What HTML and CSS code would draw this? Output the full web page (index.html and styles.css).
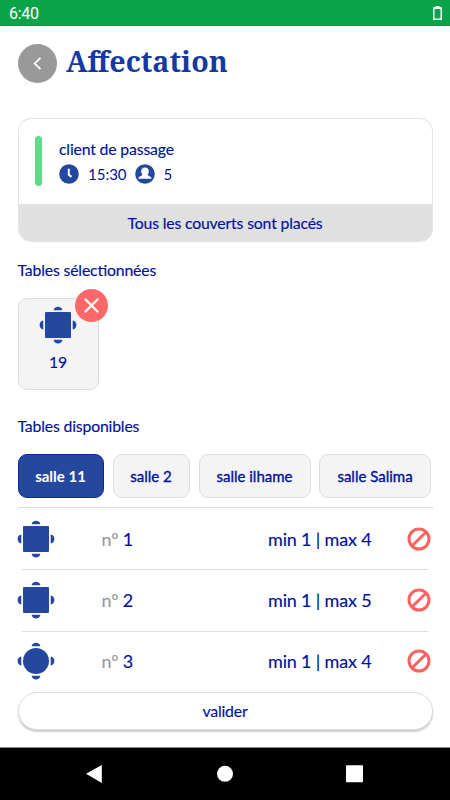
FILE: index.html
```html
<!DOCTYPE html>
<html lang="fr">
<head>
<meta charset="utf-8">
<title>Affectation</title>
<link rel="stylesheet" href="styles.css">
</head>
<body>
<svg class="defs" width="0" height="0" aria-hidden="true">
  <symbol id="seats" viewBox="0 0 38 38">
    <path d="M14.6 4.3C14.9-.6 23.1-.6 23.4 4.3ZM14.6 33.7C14.9 38.6 23.1 38.6 23.4 33.7ZM4.3 14.6C-.6 14.9-.6 23.1 4.3 23.4ZM33.7 14.6C38.6 14.9 38.6 23.1 33.7 23.4Z"/>
  </symbol>
  <symbol id="square-table" viewBox="0 0 38 38">
    <use href="#seats"/><rect x="6" y="6" width="26" height="26" rx="1"/>
  </symbol>
  <symbol id="round-table" viewBox="0 0 38 38">
    <use href="#seats"/><circle cx="19" cy="19" r="13"/>
  </symbol>
  <symbol id="ban" viewBox="0 0 24 24">
    <circle cx="12" cy="12" r="10" fill="none" stroke="#ff6060" stroke-width="3"/><path d="M5.2 18.8 18.8 5.2" stroke="#ff6060" stroke-width="3"/>
  </symbol>
</svg>
<div class="status"><span>6:40</span>
  <svg width="9" height="14" viewBox="0 0 9 14"><path d="M2.5 0h4v1.2H9V14H0V1.2h2.5Z" fill="#fff"/><path d="M1.5 3h6v9.5h-6Z" fill="#0aa34a"/></svg>
</div>
<main>
  <header>
    <button class="back"><svg width="39" height="39" viewBox="0 0 39 39"><path d="m22.5 13.8-5.8 5.7 5.8 5.7" fill="none" stroke="#fff" stroke-width="1.7"/></svg></button>
    <h1>Affectation</h1>
  </header>
  <section class="card">
    <div class="client">
      <i class="bar"></i>
      <div>
        <div class="name">client de passage</div>
        <div class="meta">
          <svg width="20" height="20" viewBox="0 0 20 20"><circle cx="10" cy="10" r="9.8" fill="#25489f"/><path d="M9.8 4.7v6l2.7 2.2" fill="none" stroke="#fff" stroke-width="2" stroke-linejoin="round"/></svg>
          <span class="time">15:30</span>
          <svg width="20" height="20" viewBox="0 0 20 20"><circle cx="10" cy="10" r="9.8" fill="#25489f"/><path d="M10 3.5c-2.6 0-4 1.9-3.8 4.2.1 1.5.8 2.4 1.3 3-.3 1.3-3.8 1-4.1 4.1h13.2c-.3-3.1-3.8-2.8-4.1-4.1.5-.6 1.2-1.5 1.3-3 .2-2.3-1.2-4.2-3.8-4.2Z" fill="#fff"/></svg>
          <span class="count">5</span>
        </div>
      </div>
    </div>
    <div class="notice">Tous les couverts sont placés</div>
  </section>
  <h2>Tables sélectionnées</h2>
  <div class="selected">
    <svg class="table" width="38" height="38"><use href="#square-table"/></svg>
    <span>19</span>
    <button class="remove"><svg width="33" height="33" viewBox="0 0 33 33"><path d="m10.5 10.5 12 12m0-12-12 12" stroke="#fff" stroke-width="2.3" stroke-linecap="round"/></svg></button>
  </div>
  <h2 class="available">Tables disponibles</h2>
  <nav class="rooms">
    <button class="room active">salle 11</button>
    <button class="room r2">salle 2</button>
    <button class="room r3">salle ilhame</button>
    <button class="room r4">salle Salima</button>
  </nav>
  <div class="list">
    <div class="row"><svg class="table" width="38" height="38"><use href="#square-table"/></svg><span class="num"><b>nº</b> 1</span><span class="range">min 1 | max 4</span><svg class="ban" width="24" height="24"><use href="#ban"/></svg></div>
    <div class="row"><svg class="table" width="38" height="38"><use href="#square-table"/></svg><span class="num"><b>nº</b> 2</span><span class="range">min 1 | max 5</span><svg class="ban" width="24" height="24"><use href="#ban"/></svg></div>
    <div class="row"><svg class="table" width="38" height="38"><use href="#round-table"/></svg><span class="num"><b>nº</b> 3</span><span class="range">min 1 | max 4</span><svg class="ban" width="24" height="24"><use href="#ban"/></svg></div>
  </div>
  <button class="submit">valider</button>
</main>
<footer>
  <svg width="450" height="52" viewBox="0 0 450 52" fill="#fff"><path d="M86 25.8 101.8 17v18Z"/><circle cx="225" cy="25.8" r="8"/><rect x="346" y="17.3" width="17" height="17" rx=".8"/></svg>
</footer>
</body>
</html>
```
FILE: styles.css
```css
* { box-sizing: border-box; }
body { margin: 0; width: 450px; height: 800px; display: flex; flex-direction: column; background: #fff; color: #00129a; font: 400 15.8px/20px Lato, sans-serif; letter-spacing: -.17px; font-feature-settings: "liga"; -webkit-text-stroke: .15px; overflow: hidden; }
button { font: inherit; letter-spacing: inherit; color: inherit; padding: 0; border: 0; display: flex; align-items: center; justify-content: center; }
svg { display: block; flex: none; }
.defs { position: absolute; }
.status { height: 26px; flex: none; background: #0aa34a; border-bottom: 1px solid #0b9a3c; color: #fff; display: flex; justify-content: space-between; align-items: center; padding: 3px 8px 0 9px; font: 16px/20px Roboto, sans-serif; -webkit-text-stroke: 0; letter-spacing: -.25px; }
.status svg { margin-top: -3px; }
main { height: 721px; flex: none; padding: 18px 17.5px 0; }
header { display: flex; height: 39px; align-items: center; gap: 9px; }
.back { width: 39px; height: 39px; border-radius: 50%; background: #999; }
h1 { margin: -5px 0 0 .5px; font: bold 28.6px/38px "Noto Serif", "Droid Serif", "DejaVu Serif", serif; letter-spacing: 0; color: #153a9f; -webkit-text-stroke: 0; }
.card { height: 124px; margin-top: 35px; border: 1.5px solid #e2e2e2; border-radius: 13px; overflow: hidden; }
.client { display: flex; height: 85px; padding: 17px 0 0 16px; gap: 17.5px; }
.bar { width: 7px; height: 50px; border-radius: 4px; background: #60db8a; }
.name { margin-top: 3px; }
.meta { display: flex; align-items: center; height: 20px; margin-top: 5px; font-size: 15px; letter-spacing: 0; -webkit-text-stroke: 0; }
.time { margin: 0 8px 0 9px; }
.count { margin: 0 0 0 9px; }
.notice { height: 38px; background: #e0e0e0; text-align: center; line-height: 38px; }
h2 { margin: 17px 0 0; font: inherit; line-height: 21px; }
.selected { position: relative; width: 81px; height: 92px; margin-top: 18px; border: 1px solid #ddd; border-radius: 9px; background: #f4f4f4; display: flex; flex-direction: column; align-items: center; padding-top: 7px; gap: 8px; }
.table { fill: #25489f; }
.selected .table { margin-left: -1px; }
.remove { position: absolute; left: 56px; top: -10px; width: 33px; height: 33px; border-radius: 50%; background: #ff6868; }
.available { margin-top: 25px; }
.rooms { display: flex; gap: 9px; height: 44px; margin-top: 18px; }
.room { width: 86px; height: 44px; border: 1px solid #ddd; border-radius: 9px; background: #f4f4f4; font-size: 15px; letter-spacing: 0; -webkit-text-stroke: .35px; }
.room.active { background: #25489f; border-color: #0c2898; color: #fff; font-weight: 700; -webkit-text-stroke: 0; }
.r2 { width: 77px; }
.r3 { width: 112px; }
.r4 { width: 112px; margin-left: -.5px; }
.list { margin-top: 9px; border-top: 1px solid #ddd; }
.row { position: relative; height: 61.3px; display: flex; align-items: center; font-size: 18px; }
.row + .row::before { content: ""; position: absolute; left: 4px; right: 5px; top: 0; border-top: 1px solid #ddd; }
.row .table { margin: 0 47px 0 -1px; }
.num { width: 166.5px; }
.range { width: 139px; }
b { color: #999; font-weight: 400; }
.submit { width: 415px; height: 38px; border-radius: 19px; border: 1px solid #ddd; background: #fff; box-shadow: 0 2px 2px #ccc; }
footer { height: 53px; flex: none; background: #000; border-top: 1px solid #888; }
```
